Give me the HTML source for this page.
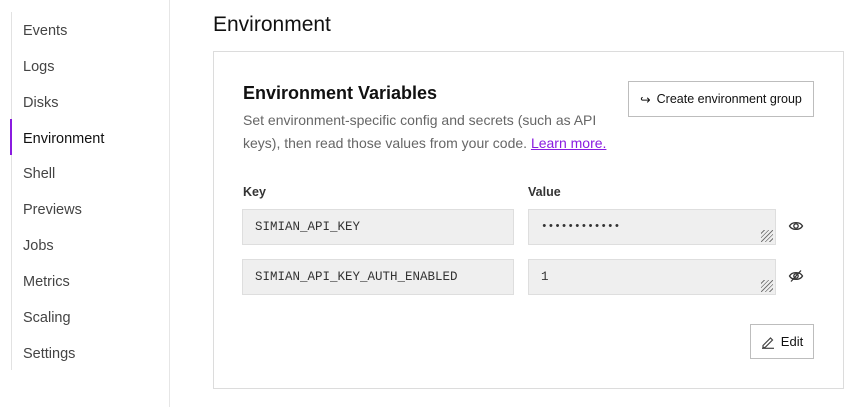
<!DOCTYPE html>
<html><head><style>
body{margin:0;width:859px;height:407px;background:#fff;font-family:"Liberation Sans",sans-serif;position:relative;overflow:hidden;color:#111}
.a{position:absolute}
.nav{left:11px;top:12px;height:358px;border-left:1px solid #e2e2e2}
.nav div{position:absolute;left:11px;font-size:14.5px;color:#444;white-space:nowrap}
.div{left:169px;top:0;width:1px;height:407px;background:#e6e6e6}
.card{left:213px;top:51px;width:629px;height:336px;border:1px solid #dcdcdc}
.in{background:#efefef;border:1px solid #dedede;box-sizing:border-box;height:36px;font-family:"Liberation Mono",monospace;font-size:12.5px;color:#333;line-height:34px;padding-left:12px}
.btn{border:1px solid #bdbdbd;box-sizing:border-box;font-size:13px;color:#111;display:flex;align-items:center;justify-content:center;gap:6px}
.grip{position:absolute;right:2px;bottom:2px;width:12px;height:12px;background:repeating-linear-gradient(135deg,transparent 0 2px,#777 2px 3px)}
</style></head><body>
<div class="a nav">
<div style="top:11px;color:#444">Events</div>
<div style="top:47px">Logs</div>
<div style="top:83px">Disks</div>
<div style="top:119px;color:#111">Environment</div>
<div style="top:154px">Shell</div>
<div style="top:190px">Previews</div>
<div style="top:226px">Jobs</div>
<div style="top:262px">Metrics</div>
<div style="top:298px">Scaling</div>
<div style="top:334px">Settings</div>
</div>
<div class="a" style="left:10px;top:119px;width:2px;height:36px;background:#8a1be0"></div>
<div class="a div"></div>
<div class="a" style="left:213px;top:13px;font-size:21px;color:#111">Environment</div>
<div class="a card"></div>
<div class="a" style="left:243px;top:83px;font-size:18px;font-weight:bold">Environment Variables</div>
<div class="a" style="left:243px;top:109px;font-size:14px;color:#666;line-height:23px;width:370px">Set environment-specific config and secrets (such as API keys), then read those values from your code. <span style="color:#8a1be0;text-decoration:underline">Learn more.</span></div>
<div class="a btn" style="left:628px;top:81px;width:186px;height:36px;font-size:12.5px"><span>↪</span>Create environment group</div>
<div class="a" style="left:243px;top:185px;font-size:12.5px;font-weight:bold;color:#333">Key</div>
<div class="a" style="left:528px;top:185px;font-size:12.5px;font-weight:bold;color:#333">Value</div>
<div class="a in" style="left:242px;top:209px;width:272px">SIMIAN_API_KEY</div>
<div class="a in" style="left:528px;top:209px;width:248px;letter-spacing:0px;font-size:11px">••••••••••••<div class="grip"></div></div>
<div class="a in" style="left:242px;top:259px;width:272px">SIMIAN_API_KEY_AUTH_ENABLED</div>
<div class="a in" style="left:528px;top:259px;width:248px">1<div class="grip"></div></div>
<svg class="a" style="left:788px;top:219px" width="16" height="14" viewBox="0 0 16 14"><path d="M1.5 7C4 2.5 12 2.5 14.5 7C12 11.5 4 11.5 1.5 7Z" fill="none" stroke="#333" stroke-width="1.3"/><circle cx="8" cy="7" r="2.2" fill="none" stroke="#333" stroke-width="1.3"/></svg>
<svg class="a" style="left:788px;top:269px" width="16" height="14" viewBox="0 0 16 14"><path d="M1.5 7C4 2.5 12 2.5 14.5 7C12 11.5 4 11.5 1.5 7Z" fill="none" stroke="#333" stroke-width="1.3"/><circle cx="8" cy="7" r="2.2" fill="none" stroke="#333" stroke-width="1.3"/><path d="M3 12.5L13 1.5" stroke="#333" stroke-width="1.3"/></svg>
<div class="a btn" style="left:750px;top:324px;width:64px;height:35px"><svg width="14" height="14" viewBox="0 0 14 14"><path d="M2 10.5L9.5 3l2 2L4 12.5H2z" fill="none" stroke="#444" stroke-width="1.2"/><path d="M1 13.3h12" stroke="#444" stroke-width="1.2"/></svg>Edit</div>
</body></html>
